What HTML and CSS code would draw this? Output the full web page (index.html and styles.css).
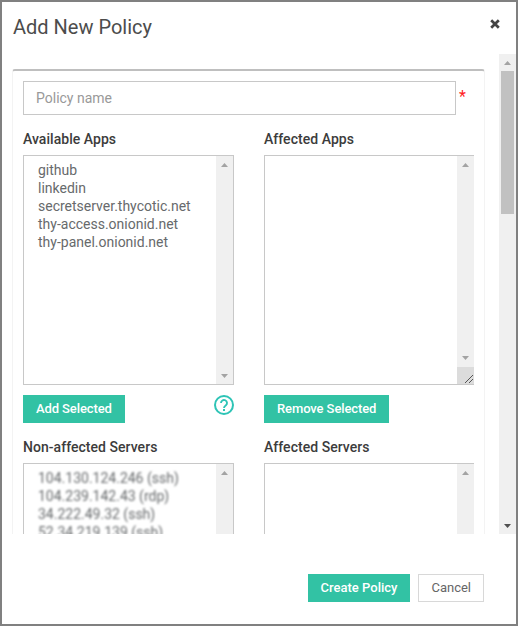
FILE: index.html
```html
<!DOCTYPE html>
<html lang="en">
<head>
<meta charset="utf-8">
<title>Add New Policy</title>
<link rel="stylesheet" href="styles.css">
</head>
<body>
<div class="modal">
  <header class="header">
    <h1>Add New Policy</h1>
    <button class="close" aria-label="Close"><svg width="10" height="10" viewBox="0 0 10 10"><path d="M1.200 1.200 8.800 8.800M8.800 1.200 1.200 8.800" stroke="#444" stroke-width="2.700"/></svg></button>
  </header>
  <main class="content">
    <section class="panel">
      <div class="name-row">
        <input class="name" type="text" placeholder="Policy name">
        <span class="required">*</span>
      </div>
      <div class="columns">
        <div class="column">
          <h2>Available Apps</h2>
          <div class="list">
            <ul>
              <li>github</li>
              <li>linkedin</li>
              <li>secretserver.thycotic.net</li>
              <li>thy-access.onionid.net</li>
              <li>thy-panel.onionid.net</li>
            </ul>
            <div class="bar"><i class="arrow up"></i><i class="arrow down"></i></div>
          </div>
          <div class="actions">
            <button class="btn primary tight">Add Selected</button>
            <svg class="help" width="20" height="20" viewBox="0 0 20 20"><circle cx="10" cy="10" r="9" fill="none" stroke="#2ec4b6" stroke-width="2"/><path d="M7 8a3 3 0 1 1 4.900 2.300C10.700 11.300 10 11.700 10 13" fill="none" stroke="#2ec4b6" stroke-width="1.900"/><path d="M9 14h2v2H9z" fill="#2ec4b6"/></svg>
          </div>
          <h2>Non-affected Servers</h2>
          <div class="list">
            <ul class="masked">
              <li>104.130.124.246 (ssh)</li>
              <li>104.239.142.43 (rdp)</li>
              <li>34.222.49.32 (ssh)</li>
              <li>52.34.219.139 (ssh)</li>
            </ul>
            <div class="bar"><i class="arrow up"></i><i class="arrow down"></i></div>
          </div>
        </div>
        <div class="column">
          <h2>Affected Apps</h2>
          <div class="list open">
            <ul></ul>
            <div class="bar short"><i class="arrow up"></i><i class="arrow down"></i><svg class="grip" width="17" height="17" viewBox="0 0 17 17" shape-rendering="crispEdges"><path d="M8 16 16 8M12 16l4-4" stroke="#555"/></svg></div>
          </div>
          <div class="actions">
            <button class="btn primary tight">Remove Selected</button>
          </div>
          <h2>Affected Servers</h2>
          <div class="list open">
            <ul></ul>
            <div class="bar"><i class="arrow up"></i><i class="arrow down"></i></div>
          </div>
        </div>
      </div>
    </section>
    <div class="scroll">
      <i class="arrow up"></i>
      <div class="thumb"></div>
      <i class="arrow down dark"></i>
    </div>
  </main>
  <footer class="footer">
    <button class="btn primary">Create Policy</button>
    <button class="btn">Cancel</button>
  </footer>
</div>
</body>
</html>
```
FILE: styles.css
```css
* { box-sizing: border-box; }

body {
  margin: 0;
  font: 14px/18px Roboto, sans-serif;
  color: #676a6c;
  background: #fff;
}

.modal {
  width: 518px;
  height: 626px;
  border: 2px solid #808080;
  display: flex;
  flex-direction: column;
  overflow: hidden;
}

.header {
  height: 52px;
  padding: 10px 16px 0 11px;
  display: flex;
  justify-content: space-between;
  align-items: flex-start;
}

h1 {
  margin: 0;
  font-size: 20px;
  line-height: 30px;
  font-weight: 400;
  color: #4c4c4c;
}

.close {
  margin-top: 7px;
  padding: 0;
  border: 0;
  background: none;
  line-height: 0;
}

.content {
  height: 480px;
  display: flex;
  justify-content: space-between;
  align-items: flex-start;
  overflow: hidden;
}

.panel {
  width: 473px;
  height: 700px;
  margin: 15px 0 0 10px;
  padding: 10px;
  border: 1px solid #f3f3f3;
  border-top: 2px solid #bfbfbf;
  border-radius: 3px 3px 0 0;
}

.name-row { display: flex; }

.name {
  width: 433px;
  height: 34px;
  padding: 0 12px;
  border: 1px solid #c8c8c8;
  border-radius: 0;
  font: 14px Roboto, sans-serif;
}

.name::placeholder { color: #999; }

.required {
  margin: 7px 0 0 3px;
  font-size: 16px;
  color: #f22;
}

.columns {
  margin-top: 15px;
  display: grid;
  grid-template-columns: 211px 210px;
  column-gap: 30px;
}

h2 {
  margin: 0 0 7px;
  font-size: 14px;
  line-height: 18px;
  font-weight: 500;
  letter-spacing: 0.04px;
  color: #3c3c3c;
}

.list {
  height: 230px;
  border: 1px solid #c8c8c8;
  display: flex;
  justify-content: space-between;
}

.open { border-right: 0; }

ul {
  margin: 0;
  padding: 5px 0 0 14px;
  list-style: none;
}

.masked { filter: blur(1.2px); }

.bar {
  width: 17px;
  padding: 7px 0 6px;
  background: #f0f0f0;
  display: flex;
  flex-direction: column;
  justify-content: space-between;
  align-items: center;
}

.short { padding-bottom: 0; }
.short .down { margin: auto 0 7px; }

.grip {
  display: block;
  background: #dcdcdc;
}

.arrow {
  width: 7px;
  height: 4px;
  background: #a3a3a3;
}

.up { clip-path: polygon(50% 0, 100% 100%, 0 100%); }
.down { clip-path: polygon(0 0, 100% 0, 50% 100%); }
.dark { background: #505050; }

.actions {
  height: 28px;
  margin: 10px 0 15px;
  display: flex;
  justify-content: space-between;
  align-items: flex-start;
}

.btn {
  height: 28px;
  padding: 0 12px;
  border: 1px solid #d8d8d8;
  background: #fff;
  font: 400 13px/24px Roboto, sans-serif;
  color: #666;
  white-space: nowrap;
}

.primary {
  border-color: #32c2a4;
  background: #32c2a4;
  font-weight: 500;
  color: #fff;
}

.tight { letter-spacing: -0.1px; }

.scroll {
  width: 17px;
  height: 480px;
  padding: 7px 0 6px;
  background: #f0f0f0;
  display: flex;
  flex-direction: column;
  align-items: center;
}

.thumb {
  width: 13px;
  height: 143px;
  margin: 6px 0 auto;
  background: #c1c1c1;
}

.footer {
  padding: 40px 32px 0 0;
  display: flex;
  justify-content: flex-end;
  gap: 8px;
}
```
